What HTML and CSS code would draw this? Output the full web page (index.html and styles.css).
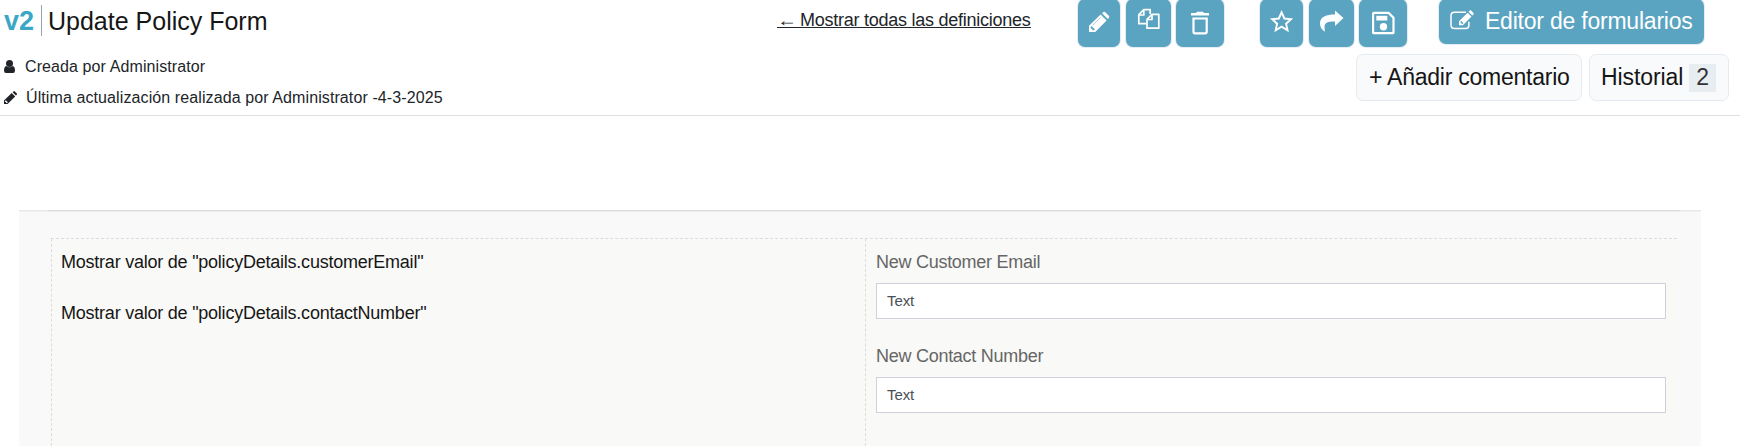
FILE: index.html
```html
<!DOCTYPE html>
<html lang="es">
<head>
<meta charset="utf-8">
<title>Update Policy Form</title>
<link rel="stylesheet" href="styles.css">
</head>
<body>
<header class="header">
  <div class="top-row">
    <span class="version">v2</span>
    <h1 class="title">Update Policy Form</h1>
    <a class="back-link"><span class="arrow">←</span><span class="back-text">Mostrar todas las definiciones</span></a>
    <div class="actions">
      <span class="btn edit"><svg width="42" height="48" viewBox="0 0 42 48"><path fill="#fff" fill-rule="evenodd" d="M11 33v-6.200L22.600 15.400l6 6L17.200 33zM24 14.200l1.300-1.200q.9-.6 1.700 0l4 4q.7.9 0 1.700L29.800 20zM12.700 28v1.700h1.600v1.600h1.700l.9-.9-3.200-3.300z"/><path d="M14.800 26.200l8-8" stroke="#8fc3d6" stroke-width=".8"/></svg></span>
      <span class="btn copy"><svg width="45" height="48" viewBox="0 0 45 48"><g fill="none" stroke="#fff" stroke-width="1.700" stroke-linejoin="round"><path d="M20 24.700h-7.200v-9l5-5h6.400v4.400"/><path d="M12.800 16h5v-5"/><path d="M26 15.300h6.800v13.900H21v-8.900z"/><path d="M21 20.500h5v-5"/></g></svg></span>
      <span class="btn trash"><svg width="48" height="48" viewBox="0 0 48 48"><path fill="#fff" d="M15 14h5l1-1.200h6l1 1.200h5v2.600H15z"/><path fill="none" stroke="#fff" stroke-width="2.200" d="M17.500 19.500h13.200v13.500q0 1.300-1.500 1.300H19q-1.500 0-1.500-1.300z"/></svg></span>
      <span class="btn star"><svg width="43" height="48" viewBox="0 0 43 48"><path fill="none" stroke="#fff" stroke-width="1.900" d="M21.600 13.300l2.800 6.200 6.600.8-4.900 4.400 1.400 6.500-5.900-3.500-5.900 3.500 1.400-6.500-4.900-4.400 6.600-.8z"/></svg></span>
      <span class="btn share"><svg width="45" height="48" viewBox="0 0 45 48"><path fill="#fff" d="M26 11.500l8.500 7.500L26 27v-4.500c-6-.2-10.500.9-10.500 5 0 2 .3 3.500.4 5.300-2.600-1.600-4.900-4.600-4.900-8.300 0-7 6.500-9 15-9z"/></svg></span>
      <span class="btn save"><svg width="48" height="48" viewBox="0 0 48 48"><path fill="none" stroke="#fff" stroke-width="2.200" stroke-linejoin="round" d="M15 13.900h14.600l4.900 4.900v14.600q0 .8-.8.800H15q-.9 0-.9-.8V14.700q0-.8.900-.8z"/><path fill="#fff" d="M17.300 16.800h11V21.500h-11z"/><circle cx="24.500" cy="27.700" r="3.700" fill="#fff"/></svg></span>
    </div>
    <span class="btn editor"><svg class="editor-icon" width="26" height="22" viewBox="0 0 26 22"><path fill="none" stroke="#fff" stroke-width="1.500" d="M16 2.200H4.500Q1 2.200 1 5.600V15Q1 18.500 4.500 18.500H15.500q3.400 0 3.400-3.500v-3.300"/><path fill="#fff" fill-rule="evenodd" d="M9 15.200v-3.900L17.600 2.700l3.900 3.900-8.600 8.600zM18.500 1.800l1.200-1.200q.7-.5 1.400 0L23.500 3q.6.7 0 1.400l-1.200 1.200zM10.400 11.700v1.100h1.100v1.100h1.100l.8-.8-2.200-2.200z"/></svg>Editor de formularios</span>
  </div>
  <div class="bottom-row">
    <div class="meta">
      <div class="meta-line"><svg width="12" height="14" viewBox="0 0 12 14"><circle cx="5.500" cy="3.600" r="3.500" fill="#212529"/><path fill="#212529" d="M2.300 6q3.200 2.500 6.400 0Q11 6.600 11 10.500 11 13 9 13H2Q0 13 0 10.500 0 6.600 2.300 6z"/></svg><span class="created">Creada por Administrator</span></div>
      <div class="meta-line"><svg width="14" height="14" viewBox="0 0 14 14"><path fill="#212529" fill-rule="evenodd" d="M0 13V9.400L7.700 2l3.500 3.500L3.600 13zM8.600 1.200L9.500.4q.6-.6 1.300 0l2 2q.5.600 0 1.300l-.9.900zM1.100 10v.9h1v1h1l.7-.6-2-2z"/></svg><span class="updated">Última actualización realizada por Administrator -4-3-2025</span></div>
    </div>
    <div class="side-actions">
      <span class="light-btn comment"><span>+ Añadir comentario</span></span>
      <span class="light-btn history"><span>Historial</span><span class="count">2</span></span>
    </div>
  </div>
</header>
<main class="panel">
  <div class="form">
    <div class="grid">
      <section class="column values">
        <p>Mostrar valor de "policyDetails.customerEmail"</p>
        <p>Mostrar valor de "policyDetails.contactNumber"</p>
      </section>
      <section class="column fields">
        <label>New Customer Email</label>
        <div class="input">Text</div>
        <label>New Contact Number</label>
        <div class="input">Text</div>
      </section>
    </div>
  </div>
</main>
</body>
</html>
```
FILE: styles.css
```css
* { box-sizing: border-box; }
body {
  margin: 0;
  height: 446px;
  overflow: hidden;
  background: #fff;
  color: #212529;
  font-family: "Liberation Sans", Arial, sans-serif;
}
svg { display: block; flex: none; }
.header { height: 116px; border-bottom: 1px solid #dee2e6; }
.top-row { display: flex; align-items: flex-start; height: 54px; }
.version {
  width: 42px;
  height: 31px;
  margin-top: 5px;
  padding-left: 4px;
  border-right: 1px solid #97a5b0;
  color: #3ba6c6;
  font-size: 27px;
  font-weight: bold;
  line-height: 32px;
}
.title {
  width: 728px;
  margin: 6px 0 0 6px;
  color: #161616;
  font-size: 25px;
  font-weight: normal;
  line-height: 31px;
  white-space: nowrap;
}
.back-link {
  display: flex;
  width: 254px;
  height: 20px;
  margin: 8px 0 0 1px;
  border-bottom: 1px solid #212529;
  font-size: 18px;
  line-height: 24px;
  letter-spacing: -.25px;
  white-space: nowrap;
}
.arrow { width: 22px; font-size: 18px; transform: scaleX(1.1); transform-origin: 0 50%; }
.back-text { margin-left: 1px; }
.actions { display: flex; margin-left: 47px; }
.btn {
  height: 48px;
  margin-top: -1px;
  border-radius: 7px;
  background: #5aa4c1;
  box-shadow: 0 0 0 1px #e4edf3;
  color: #fff;
}
.btn.edit { width: 42px; }
.btn.copy { width: 45px; margin-left: 6px; }
.btn.trash { width: 48px; margin-left: 5px; }
.btn.star { width: 43px; margin-left: 36px; }
.btn.share { width: 45px; margin-left: 6px; }
.btn.save { width: 48px; margin-left: 5px; }
.btn.editor {
  display: flex;
  width: 265px;
  height: 45px;
  margin-left: 32px;
  padding-left: 11px;
  font-size: 23px;
  line-height: 44px;
  letter-spacing: -.22px;
  white-space: nowrap;
}
.btn .editor-icon { margin: 11px 9px 0 0; }
.bottom-row { display: flex; justify-content: space-between; }
.meta { padding-top: 2px; padding-left: 4px; font-size: 16px; letter-spacing: .1px; }
.meta-line { display: flex; align-items: center; height: 21px; margin-bottom: 10px; white-space: nowrap; }
.created { margin-left: 9px; }
.updated { margin-left: 8px; }
.side-actions { display: flex; gap: 7px; margin-right: 11px; }
.light-btn {
  display: flex;
  align-items: center;
  height: 47px;
  padding-left: 12px;
  border: 1px solid #e5ebf0;
  border-radius: 7px;
  background: #f9fafb;
  color: #161616;
  font-size: 23px;
  letter-spacing: -.24px;
  white-space: nowrap;
}
.comment { width: 226px; }
.history { width: 140px; padding-left: 11px; letter-spacing: -.1px; }
.count {
  width: 27px;
  height: 28px;
  margin-left: 6px;
  background: #e8edf2;
  color: #333;
  line-height: 27px;
  text-align: center;
}
.panel {
  width: 1682px;
  height: 236px;
  margin: 94px 0 0 19px;
  padding: 0 21px 0 29px;
  background: #f9f9f9;
  box-shadow: inset 0 1px 0 #e9e9e9, inset 0 2px 0 #f0f0f0;
}
.form { height: 236px; padding: 27px 3px 0; border-top: 1px solid #dddddd; box-shadow: inset 0 1px 0 #ececec; }
.grid {
  display: grid;
  grid-template-columns: 814px 812px;
  height: 208px;
  border-top: 1px dashed #dcdcdc;
  background: #f9f9f7;
}
.column { padding: 13px 10px 0; border-left: 1px dashed #dcdcdc; font-size: 18px; letter-spacing: -.23px; }
.values { padding-left: 9px; }
.values p { margin: 0 0 30px; line-height: 21px; color: #161616; white-space: nowrap; }
.fields label { display: block; height: 31px; line-height: 21px; letter-spacing: -.27px; color: #666; }
.input {
  width: 790px;
  height: 36px;
  margin-bottom: 27px;
  padding-left: 10px;
  border: 1px solid #cdd1d9;
  background: #fff;
  color: #495057;
  font-size: 15px;
  letter-spacing: -.1px;
  line-height: 34px;
}
```
